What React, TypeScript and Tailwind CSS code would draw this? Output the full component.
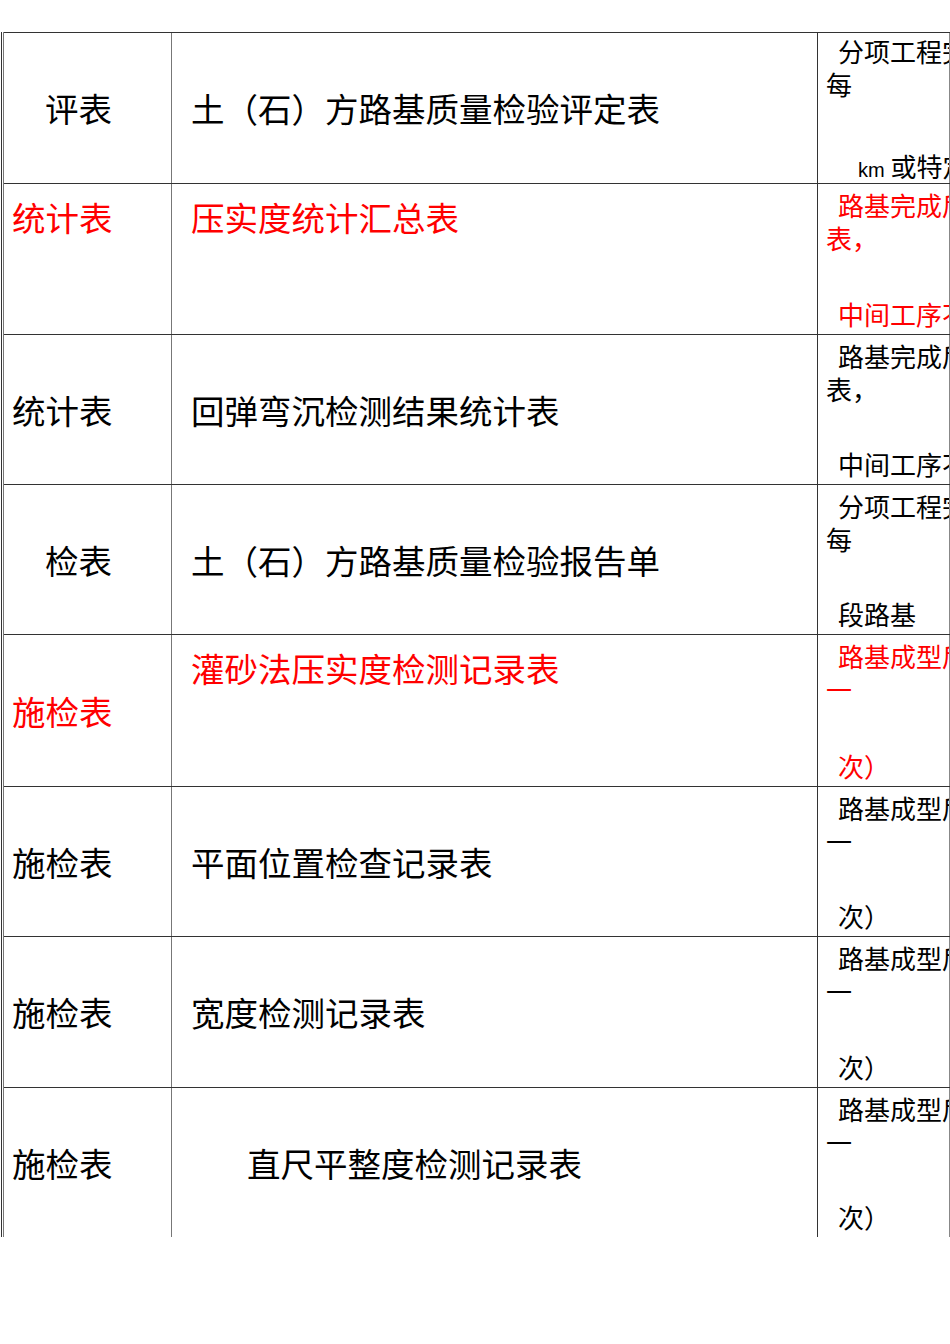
type Row = {
  h: string;
  label: string;
  labelTop?: boolean;
  labelIndent?: boolean;
  name: string;
  nameTop?: boolean;
  nameIndent?: boolean;
  red?: boolean;
  notes: [string, string, string];
  km?: boolean;
};

const rows: Row[] = [
  { h: "h-[151px]", label: "评表", labelIndent: true, name: "土（石）方路基质量检验评定表", notes: ["分项工程完成后", "每", "或特定"], km: true },
  { h: "h-[151px]", label: "统计表", labelTop: true, name: "压实度统计汇总表", nameTop: true, red: true, notes: ["路基完成后", "表，", "中间工序不"] },
  { h: "h-[150px]", label: "统计表", name: "回弹弯沉检测结果统计表", notes: ["路基完成后", "表，", "中间工序不"] },
  { h: "h-[150px]", label: "检表", labelIndent: true, name: "土（石）方路基质量检验报告单", notes: ["分项工程完成后", "每", "段路基"] },
  { h: "h-[152px]", label: "施检表", name: "灌砂法压实度检测记录表", nameTop: true, red: true, notes: ["路基成型后", "一", "次）"] },
  { h: "h-[150px]", label: "施检表", name: "平面位置检查记录表", notes: ["路基成型后", "一", "次）"] },
  { h: "h-[151px]", label: "施检表", name: "宽度检测记录表", notes: ["路基成型后", "一", "次）"] },
  { h: "h-[150px]", label: "施检表", name: "直尺平整度检测记录表", nameIndent: true, notes: ["路基成型后", "一", "次）"] },
];

export default function App() {
  return (
    <div
      className="h-[1344px] w-[950px] overflow-hidden bg-white pt-[32px] text-black"
      style={{ fontFamily: '"Noto Sans CJK SC", "Noto Sans", sans-serif' }}
    >
      <div className="ml-[1px] w-[949px] border-l border-[#333]">
        <div className="ml-[1px] border-l border-[#777]">
          {rows.map((row, i) => (
            <div key={i} className={`flex ${row.h} border-t border-[#333] ${row.red ? "text-[#ff0000]" : ""}`}>
              <div
                className={`flex w-[168px] shrink-0 border-r border-[#777] text-[33.5px] leading-[40px] ${
                  row.labelTop ? "items-start pt-[13px]" : "items-center"
                } ${row.labelIndent ? "pl-[41px]" : "pl-[8px]"}`}
              >
                {row.label}
              </div>
              <div
                className={`flex w-[646px] shrink-0 border-r border-[#333] text-[33.5px] leading-[40px] ${
                  row.nameTop ? "items-start pt-[13px]" : "items-center"
                } ${row.nameIndent ? "pl-[75px]" : "pl-[19px]"}`}
              >
                {row.name}
              </div>
              <div
                className={`flex w-[132px] shrink-0 flex-col justify-between overflow-hidden whitespace-nowrap border-r border-[#888] pl-[8px] text-[26px] leading-[33px] ${
                  row.km ? "pt-[1px] pb-0" : "pt-[4px] pb-[4px]"
                }`}
              >
                <div>
                  <div className="pl-[12px]">{row.notes[0]}</div>
                  <div>{row.notes[1]}</div>
                </div>
                {row.km ? (
                  <div className="-mb-[4px] pl-[32px]">
                    <span className="text-[20px]" style={{ fontFamily: '"Liberation Sans", sans-serif' }}>
                      km
                    </span>{" "}
                    {row.notes[2]}
                  </div>
                ) : (
                  <div className="pl-[12px]">{row.notes[2]}</div>
                )}
              </div>
            </div>
          ))}
        </div>
      </div>
    </div>
  );
}
